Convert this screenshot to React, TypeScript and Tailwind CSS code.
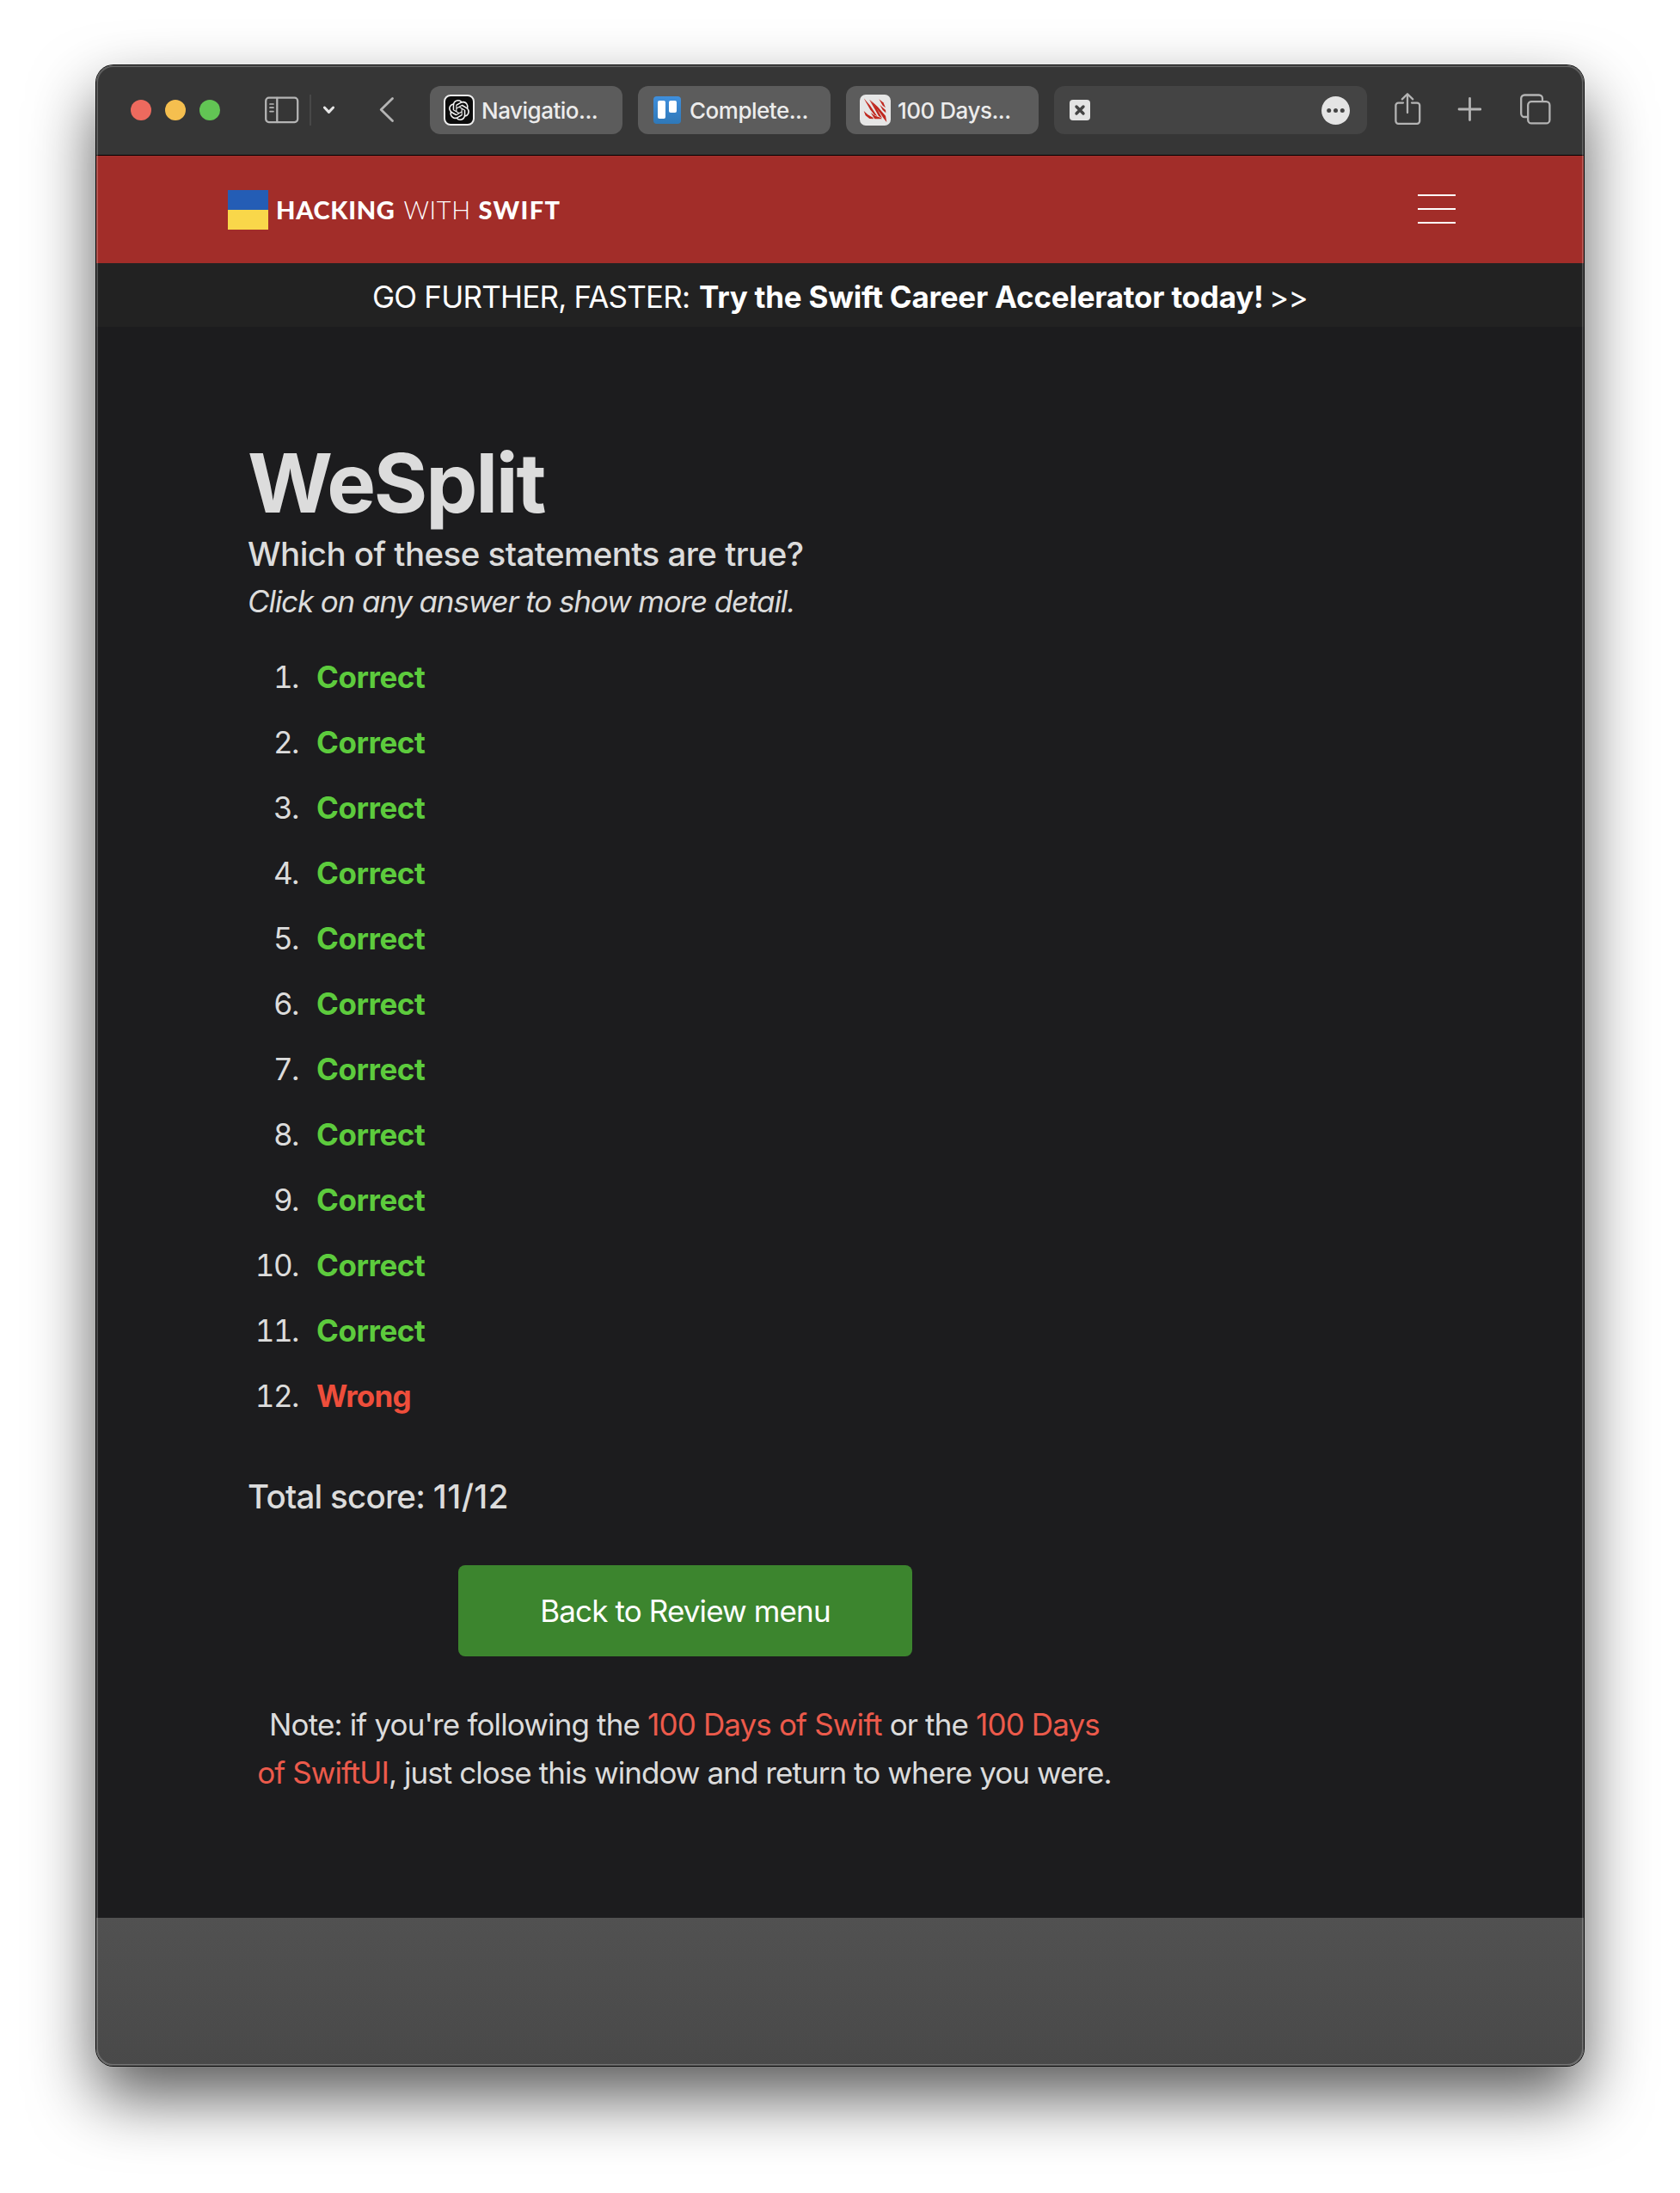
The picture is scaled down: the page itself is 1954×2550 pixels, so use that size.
import type { ReactNode } from "react";
import { SiOpenai } from "react-icons/si";

const stroke = {
  fill: "none",
  stroke: "#b4b4b4",
  strokeWidth: 2.3,
  strokeLinecap: "round" as const,
  strokeLinejoin: "round" as const,
};

function SidebarIcon() {
  return (
    <svg className="ml-[52px] h-8 w-10 shrink-0" viewBox="0 0 40 32" {...stroke}>
      <rect x="1.2" y="1.7" width="37" height="28.4" rx="3.6" />
      <path d="M14.3 2v28" />
      <path d="M6 9h4M6 13.2h4M6 17.6h4" strokeWidth="1.7" />
    </svg>
  );
}

function ClawIcon() {
  return (
    <svg className="size-9" viewBox="0 0 108 108" fill="#c0281f">
      <path d="M14 13 36 38 61 76 50 70 36 52Z" />
      <path d="M33 17 58 46 78 82 66 75 52 50Z" />
      <path d="M34 17 62 42 90 74 94 96 84 84 72 66Z" />
      <path d="M67 16 82 28 90 46 80 38Z" />
      <path d="M70 36 90 54 91 64 80 54Z" />
      <path d="M14 57 28 70 46 80 48 85 34 84 20 73Z" />
      <path d="M38 63 54 74 72 80 78 85 52 85Z" />
    </svg>
  );
}

function OpenAiBadge() {
  return (
    <div className="flex size-9 items-center justify-center rounded-[8px] border-2 border-[#ededed] bg-[#0c0c0c]">
      <SiOpenai className="size-6 text-[#f2f2f2]" />
    </div>
  );
}

function TrelloBadge() {
  return (
    <div className="mx-0.5 flex size-8 justify-between rounded-[4px] bg-gradient-to-b from-[#3f8fdd] to-[#2f78b8] px-[5px] pt-[5px]">
      <div className="h-[21px] w-[9px] rounded-[2px] bg-white" />
      <div className="h-[14px] w-[9px] rounded-[2px] bg-white" />
    </div>
  );
}

function ClawBadge() {
  return (
    <div className="size-9 rounded-[7px] bg-[#e6e6e6]">
      <ClawIcon />
    </div>
  );
}

function Tab({ icon, label }: { icon: ReactNode; label: string }) {
  return (
    <div className="mr-[18px] flex h-14 w-56 shrink-0 items-center rounded-[12px] bg-[#5c5c5c] pl-4">
      {icon}
      <span className="mt-0.5 ml-2 text-[26px] leading-9 font-medium tracking-[-0.49px] whitespace-nowrap text-[#ececec]">
        {label}
      </span>
    </div>
  );
}

function Toolbar() {
  return (
    <div className="flex h-[105px] w-full items-center border-b border-black bg-[#363636] pl-10">
      <div className="flex shrink-0 gap-4">
        <div className="size-6 rounded-full bg-[#ed6a5e]" />
        <div className="size-6 rounded-full bg-[#f5bf4f]" />
        <div className="size-6 rounded-full bg-[#62c554]" />
      </div>
      <SidebarIcon />
      <div className="ml-3 h-9 w-0.5 shrink-0 bg-[#484848]" />
      <svg className="ml-[13px] h-3 w-4 shrink-0" viewBox="0 0 16 12" fill="none" stroke="#e6e6e6" strokeWidth="3" strokeLinecap="round" strokeLinejoin="round">
        <path d="M2.4 3 7.5 8.4 12.6 3" />
      </svg>
      <svg className="mr-[41px] ml-[50px] h-8 w-[18px] shrink-0" viewBox="0 0 18 32" {...stroke} strokeWidth="2.8">
        <path d="M15.5 2.5 2.2 15.5 15.5 28.5" />
      </svg>
      <Tab icon={<OpenAiBadge />} label="Navigatio..." />
      <Tab icon={<TrelloBadge />} label="Complete..." />
      <Tab icon={<ClawBadge />} label="100 Days..." />
      <div className="flex h-14 w-[364px] shrink-0 items-center justify-between rounded-[12px] bg-[#444444] pr-5 pl-[18px]">
        <svg className="size-6" viewBox="0 0 24 24">
          <rect width="24" height="24" rx="4" fill="#e4e4e4" />
          <path d="M8 8 16 16M16 8 8 16" stroke="#444444" strokeWidth="3.4" strokeLinecap="round" />
        </svg>
        <svg className="mt-px size-[33px]" viewBox="0 0 33 33">
          <circle cx="16.5" cy="16.5" r="16.5" fill="#e4e4e4" />
          <g fill="#444444">
            <circle cx="8.7" cy="16.5" r="2.5" />
            <circle cx="16.5" cy="16.5" r="2.5" />
            <circle cx="24.3" cy="16.5" r="2.5" />
          </g>
        </svg>
      </div>
      <svg className="mb-1 ml-[31px] h-10 w-8 shrink-0" viewBox="0 0 32 40" {...stroke}>
        <path d="M11 13.6H5.4a3 3 0 0 0-3 3v18.2a3 3 0 0 0 3 3h21.8a3 3 0 0 0 3-3V16.6a3 3 0 0 0-3-3H21" />
        <path d="M16 25V3.4M9.8 9.4 16 3.2 22.2 9.4" />
      </svg>
      <svg className="mb-[3px] ml-[42px] size-7 shrink-0" viewBox="0 0 28 28" {...stroke} strokeWidth="2.8">
        <path d="M14.5 1.5V26.5M2 14H27" />
      </svg>
      <svg className="mb-0.5 ml-[45px] h-9 w-9 shrink-0" viewBox="0 0 36 36" {...stroke}>
        <path d="M8 27H5.2a4 4 0 0 1-4-4V5.5a4 4 0 0 1 4-4H22a4 4 0 0 1 4 4V7.5" />
        <rect x="9.2" y="9.2" width="25.2" height="25.2" rx="4" />
      </svg>
    </div>
  );
}

function SiteHeader() {
  return (
    <div className="flex h-[125px] w-full bg-[#a22d29] pr-[149px] pl-[153px]">
      <div className="mt-10 h-[46px] w-[47px] shrink-0">
        <div className="h-[23px] bg-[#245db5]" />
        <div className="h-[23px] bg-[#f9d74a]" />
      </div>
      <div className="mt-[39px] flex h-[47px] flex-1 pl-[9px] font-['Lato'] text-[29px] leading-[47px] whitespace-nowrap text-white">
        <span className="w-[148.5px] font-black tracking-[0.7px]">HACKING</span>
        <span className="w-[87px] font-light tracking-[0.6px]">WITH</span>
        <span className="font-black tracking-[1.3px]">SWIFT</span>
      </div>
      <div className="mt-[45px] flex shrink-0 flex-col gap-3.5">
        <div className="h-0.5 w-11 bg-white" />
        <div className="h-0.5 w-11 bg-white" />
        <div className="h-0.5 w-11 bg-white" />
      </div>
    </div>
  );
}

function Banner() {
  return (
    <div className="flex h-[74px] w-full bg-[#222222] pt-px pl-[321px] text-[35px] leading-[76px] whitespace-nowrap text-white">
      <span className="w-[380px] tracking-[-0.79px]">GO FURTHER, FASTER:</span>
      <span className="w-[663px] font-bold tracking-[-0.24px]">Try the Swift Career Accelerator today!</span>
      <span className="tracking-[-0.6px]">&gt;&gt;</span>
    </div>
  );
}

const answers = Array.from({ length: 12 }, (_, i) => i < 11);

function Review() {
  return (
    <div className="h-[1850px] w-full bg-[#1c1c1e] pt-[131px] pl-44 text-[#dcdcdc]">
      <div className="w-[1016px] whitespace-nowrap">
        <h1 className="h-[100px] text-[95.5px] leading-[100px] font-bold tracking-[-2.2px]">WeSplit</h1>
        <p className="h-[65px] text-[38.5px] leading-[66px] font-medium tracking-[-0.55px]">
          Which of these statements are true?
        </p>
        <p className="h-[47px] text-[35px] leading-[47px] tracking-[-1.14px] italic">
          Click on any answer to show more detail.
        </p>
        <ol className="mt-[26px] text-[35px] leading-[76px]">
          {answers.map((correct, i) => (
            <li key={i} className="flex h-[76px]">
              <span className="w-[59px] text-right tracking-[-1.5px] tabular-nums">{i + 1}.</span>
              {correct ? (
                <span className="ml-[21px] font-bold tracking-[-0.45px] text-[#5dcb3d]">Correct</span>
              ) : (
                <span className="ml-[21px] font-bold tracking-[-0.85px] text-[#ee4e3b]">Wrong</span>
              )}
            </li>
          ))}
        </ol>
        <p className="mt-[51px] h-14 text-[38.5px] leading-[56px] font-medium tracking-[-0.75px]">
          Total score: <span className="tracking-[0.5px]">11/12</span>
        </p>
        <div className="mt-[52px] ml-[245px] h-[106px] w-[528px] rounded-[8px] bg-[#3c852e] text-center text-[35px] leading-[107px] tracking-[-0.88px] text-white">
          Back to Review menu
        </div>
        <div className="mt-[51px] text-center text-[35px] leading-[56px] tracking-[-0.86px]">
          <p>
            Note: if you're following the <span className="text-[#ec5a4b]">100 Days of Swift</span> or the{" "}
            <span className="text-[#ec5a4b]">100 Days</span>
          </p>
          <p className="tracking-[-0.94px]">
            <span className="text-[#ec5a4b]">of SwiftUI</span>, just close this window and return to where you were.
          </p>
        </div>
      </div>
    </div>
  );
}

export default function App() {
  return (
    <div className="h-[2550px] w-[1954px] overflow-hidden bg-white pt-[76px] pl-28 font-['Inter',sans-serif]">
      <div className="relative h-[2326px] w-[1730px] rounded-[20px] shadow-[0_0_0_1px_#000000,0_36px_76px_rgba(0,0,0,0.65)]">
        <div className="h-full w-full overflow-hidden rounded-[20px] bg-[#363636]">
          <Toolbar />
          <SiteHeader />
          <Banner />
          <Review />
          <div className="h-[172px] w-full bg-gradient-to-b from-[#515151] to-[#494949]" />
        </div>
        <div className="pointer-events-none absolute inset-0 rounded-[20px] border-2 border-white/20" />
      </div>
    </div>
  );
}
